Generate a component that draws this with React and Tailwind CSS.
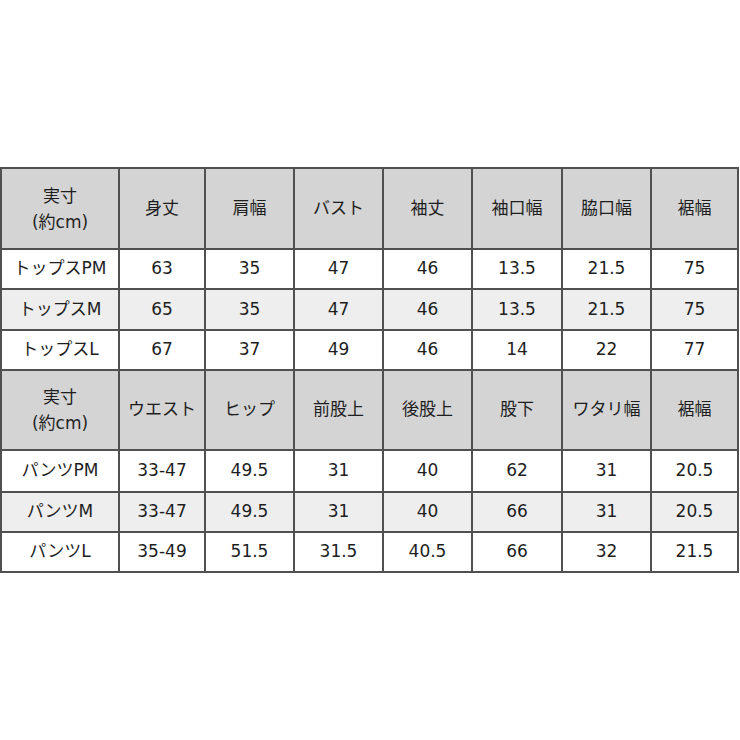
import React from "react";

const top = {
  head: ["身丈", "肩幅", "バスト", "袖丈", "袖口幅", "脇口幅", "裾幅"],
  rows: [
    ["トップスPM", "63", "35", "47", "46", "13.5", "21.5", "75"],
    ["トップスM", "65", "35", "47", "46", "13.5", "21.5", "75"],
    ["トップスL", "67", "37", "49", "46", "14", "22", "77"],
  ],
};
const bottom = {
  head: ["ウエスト", "ヒップ", "前股上", "後股上", "股下", "ワタリ幅", "裾幅"],
  rows: [
    ["パンツPM", "33-47", "49.5", "31", "40", "62", "31", "20.5"],
    ["パンツM", "33-47", "49.5", "31", "40", "66", "31", "20.5"],
    ["パンツL", "35-49", "51.5", "31.5", "40.5", "66", "32", "21.5"],
  ],
};

function Section({ data }) {
  return (
    <>
      <div className="bg-[#d4d4d4] flex flex-col items-center justify-center leading-[26px]">
        <span>実寸</span>
        <span>(約cm)</span>
      </div>
      {data.head.map((h, i) => (
        <div key={"h" + i} className="bg-[#d4d4d4] flex items-center justify-center whitespace-nowrap">
          {h}
        </div>
      ))}
      {data.rows.map((r, ri) =>
        r.map((c, ci) => (
          <div
            key={ri + "-" + ci}
            className={
              "flex items-center justify-center whitespace-nowrap " +
              (ri === 1 ? "bg-[#eeeeee]" : "bg-white")
            }
          >
            {c}
          </div>
        ))
      )}
    </>
  );
}

export default function App() {
  return (
    <div className="w-[740px] h-[740px] bg-white pt-[167px]" style={{ fontFamily: '"DejaVu Sans", "Noto Sans CJK JP", sans-serif' }}>
      <div className="w-[739px] bg-[#505050] p-[2px] grid gap-[2px] grid-cols-[116px_84px_87px_87px_87px_88px_87px_85px] grid-rows-[79px_38px_39px_38px_78px_40px_38px_38px] text-[17px] text-[#1e1e1e]">
        <Section data={top} />
        <Section data={bottom} />
      </div>
    </div>
  );
}
